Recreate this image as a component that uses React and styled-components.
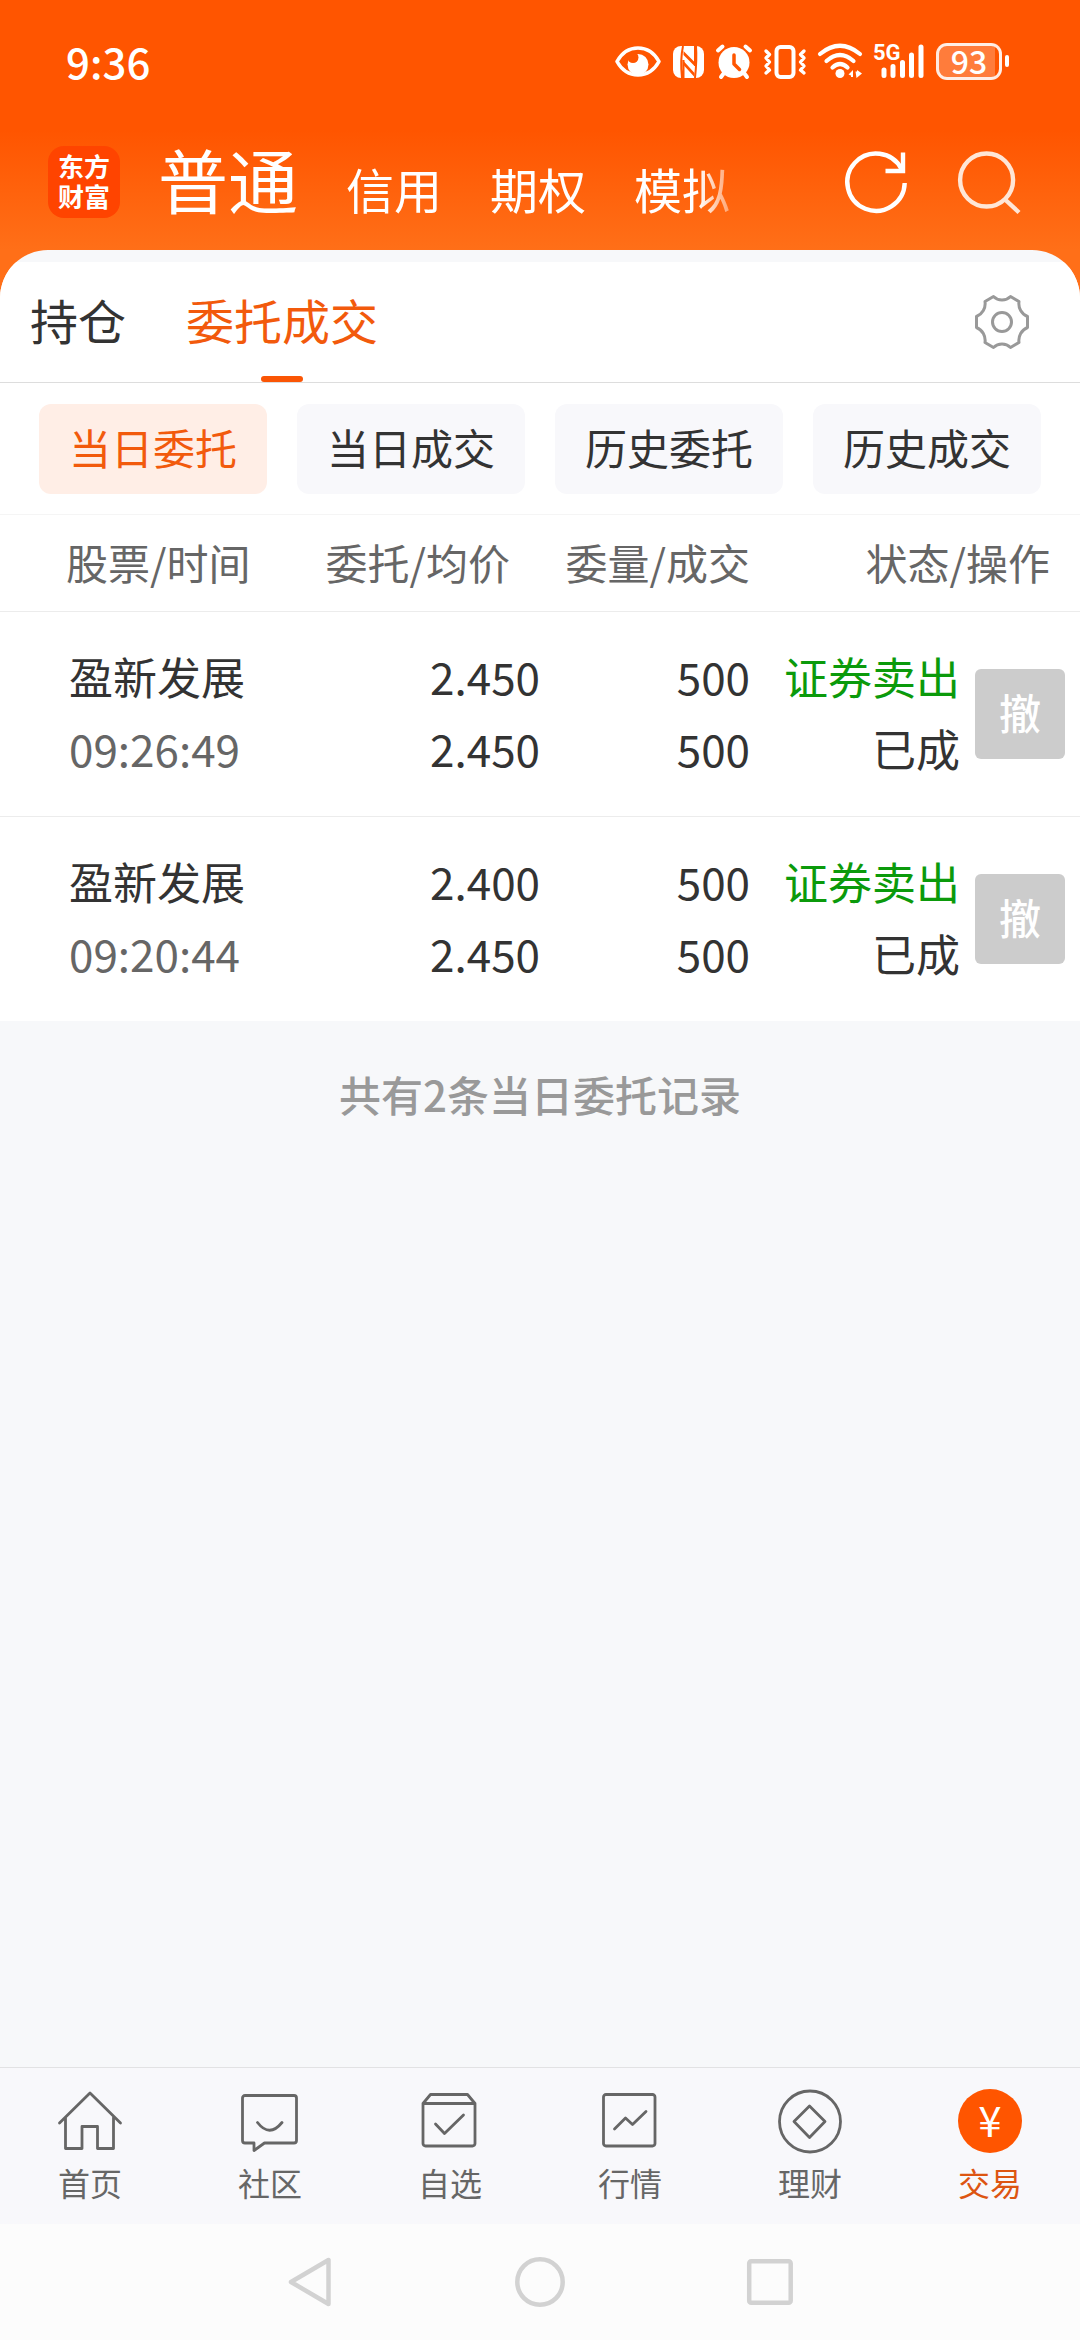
import React, { useState } from "react";
import styled, { createGlobalStyle } from "styled-components";

const GlobalStyle = createGlobalStyle`
  *, *::before, *::after { box-sizing: border-box; }
  body {
    margin: 0;
    background: #f7f8fa;
    color: #333;
    font-family: "Noto Sans CJK SC", "Noto Sans", sans-serif;
  }
  button {
    margin: 0;
    padding: 0;
    border: 0;
    background: none;
    color: inherit;
    font: inherit;
    cursor: pointer;
  }
  svg { display: block; flex: none; overflow: visible; }
`;

const Page = styled.div`
  display: flex;
  flex-direction: column;
  min-height: 100vh;
  background: #ff6f18;
`;

const TopArea = styled.header`
  color: #fff;
  background: linear-gradient(#ff5500 52%, #ff6f18);
`;

const StatusBar = styled.div`
  display: flex;
  align-items: center;
  justify-content: space-between;
  height: 122px;
  padding: 0 71px 0 66px;
`;

const Clock = styled.time`
  font-size: 42px;
  line-height: 60px;
  font-weight: 500;
`;

const StatusIcons = styled.div`
  display: flex;
  align-items: center;
  gap: 12px;
`;

const Battery = styled.div`
  display: flex;
  align-items: center;
  gap: 3px;
  &::after {
    content: "";
    width: 4px;
    height: 12px;
    border-radius: 2px;
    background: #fff;
  }
`;

const BatteryBody = styled.span`
  width: 66px;
  height: 37px;
  border: 3px solid rgba(255, 255, 255, 0.88);
  border-radius: 11px;
  background: linear-gradient(to right, rgba(255, 255, 255, 0.23) 93%, transparent 93%);
  font-size: 32px;
  line-height: 28px;
  font-weight: 500;
  text-align: center;
`;

const AccountBar = styled.div`
  display: flex;
  align-items: center;
  height: 128px;
  padding: 0 59px 8px 48px;
`;

const Logo = styled.div`
  flex: none;
  width: 72px;
  height: 72px;
  margin-right: 38px;
  padding: 5px 10px 7px;
  border-radius: 16px;
  background: #ff4400;
  font-size: 26px;
  line-height: 30px;
  font-weight: 700;
`;

const AccountTabs = styled.nav`
  display: flex;
  align-items: baseline;
  gap: 48px;
  padding-top: 2px;
  white-space: nowrap;
  mask-image: linear-gradient(to right, #000 calc(100% - 32px), rgba(0, 0, 0, 0.4));
`;

const AccountTab = styled.button`
  font-size: ${(p) => (p.$active ? "70px" : "48px")};
  line-height: 80px;
`;

const HeaderActions = styled.div`
  display: flex;
  gap: 51px;
  margin-left: auto;
`;

const Sheet = styled.main`
  flex: 1;
  overflow: hidden;
  padding-top: 12px;
  border-radius: 48px 48px 0 0;
  background: #f7f8fa;
`;

const SectionBar = styled.div`
  display: flex;
  align-items: center;
  justify-content: space-between;
  padding: 0 51px 0 30px;
  border-bottom: 1px solid #ddd;
  background: #fff;
`;

const SectionTabs = styled.nav`
  display: flex;
  gap: 60px;
`;

const SectionTab = styled.button`
  display: flex;
  flex-direction: column;
  align-items: center;
  justify-content: flex-end;
  height: 120px;
  color: ${(p) => (p.$active ? "#f25a0c" : "#333")};
  font-size: 48px;
  line-height: 60px;
  &::after {
    content: "";
    width: 42px;
    height: 6px;
    margin-top: 27px;
    border-radius: 3px;
    background: ${(p) => (p.$active ? "#fa5505" : "transparent")};
  }
`;

const Filters = styled.div`
  display: flex;
  gap: 30px;
  padding: 21px 39px 20px;
  border-bottom: 1px solid #f5f5f5;
  background: #fff;
`;

const Filter = styled.button`
  flex: 1;
  height: 90px;
  padding-bottom: 4px;
  border-radius: 12px;
  color: ${(p) => (p.$active ? "#f25a0c" : "#333")};
  background: ${(p) => (p.$active ? "#ffeee6" : "#f8f8fb")};
  font-size: 42px;
  line-height: 60px;
`;

const Orders = styled.table`
  width: 100%;
  border-collapse: collapse;
  table-layout: fixed;
  background: #fff;
`;

const Col = styled.col`
  width: ${(p) => p.$width || "auto"};
`;

const HeadCell = styled.th`
  height: 96px;
  padding: 0 ${(p) => (p.$flush ? "0" : "30px")} 2px 0;
  border-bottom: 1px solid #ececec;
  color: #666;
  font-size: 42px;
  line-height: 60px;
  font-weight: 400;
  text-align: right;
  white-space: nowrap;
`;

const NameHeadCell = styled(HeadCell)`
  padding-left: 66px;
  text-align: left;
`;

const Row = styled.tr`
  border-bottom: 1px solid #ececec;
  &:last-child { border-bottom: 0; }
`;

const Cell = styled.td`
  padding: 28px 0 32px;
  font-size: 44px;
  line-height: 72px;
  text-align: right;
  white-space: nowrap;
`;

const NameCell = styled(Cell)`
  padding-left: 69px;
  text-align: left;
`;

const ActionCell = styled.td`
  padding: 0 15px;
`;

const Line = styled.div`
  color: ${(p) => p.$color || "#333"};
`;

const CancelButton = styled.button`
  display: block;
  width: 90px;
  height: 90px;
  padding-bottom: 4px;
  border-radius: 6px;
  color: #fff;
  background: #ccc;
  font-size: 42px;
  line-height: 60px;
  font-weight: 500;
`;

const Summary = styled.p`
  margin: 0;
  padding: 43px 0;
  color: #999;
  font-size: 42px;
  line-height: 60px;
  font-weight: 500;
  text-align: center;
`;

const TabBar = styled.nav`
  display: flex;
  border-top: 1px solid #e2e2e4;
  background: #f8f8fb;
`;

const TabLink = styled.a`
  display: flex;
  flex: 1;
  flex-direction: column;
  align-items: center;
  gap: 9px;
  padding: 21px 0 22px;
  color: ${(p) => (p.$active ? "#dd5511" : "#666")};
  font-size: 32px;
  line-height: 40px;
  text-decoration: none;
`;

const SystemBar = styled.div`
  display: flex;
  align-items: center;
  justify-content: center;
  gap: 180px;
  height: 116px;
  background: #fcfcfc;
`;

const SystemButton = styled.button`
  width: 50px;
  height: 50px;
`;

const StatusGlyphs = () => (
  <>
    <svg width="46" height="40" viewBox="615 41 46 40" aria-label="护眼">
      <path d="M617 61.5C627 43.5 649 43.5 659 61.5C649 79.5 627 79.5 617 61.5Z" fill="none" stroke="#fff" strokeWidth="3.6" strokeLinejoin="round" />
      <circle cx="638" cy="64.5" r="10.5" fill="#fff" />
      <circle cx="633" cy="57.5" r="5.5" fill="#ff5500" />
    </svg>
    <svg width="31" height="40" viewBox="673 41 31 40" aria-label="NFC">
      <rect x="673" y="46" width="31" height="32" rx="8" fill="#fff" />
      <path d="M683 46Q680 60 682 78M683.5 60V78M695 46V66" fill="none" stroke="#ff5500" strokeWidth="2" />
      <path d="M683.5 51L694.5 62V66L683.5 55ZM683.5 61L694.5 73V77L683.5 65Z" fill="#ff5500" />
      <path d="M696 46Q697 60 695 78" fill="none" stroke="#ff5500" strokeWidth="2" />
    </svg>
    <svg width="36" height="40" viewBox="716 41 36 40" aria-label="闹钟">
      <circle cx="734" cy="62.5" r="15.5" fill="#fff" />
      <path d="M718 50.5L722.5 46.5M750 50.5L745.5 46.5M724 73L721 77M744 73L747 77" stroke="#fff" strokeWidth="4" strokeLinecap="round" />
      <path d="M734 55V64L739.5 69.5" fill="none" stroke="#ff5500" strokeWidth="3.5" strokeLinecap="round" strokeLinejoin="round" />
    </svg>
    <svg width="42" height="40" viewBox="764 41 42 40" aria-label="振动">
      <g fill="none" stroke="#fff" strokeWidth="4" strokeLinecap="round" strokeLinejoin="round">
        <rect x="776.5" y="47" width="17" height="30" rx="4" />
        <path strokeWidth="3.4" d="M766 51L769.5 54.5L766 58L769.5 62L766 66L769.5 70L766 73M804 51L800.5 54.5L804 58L800.5 62L804 66L800.5 70L804 73" />
      </g>
    </svg>
    <svg width="44" height="40" viewBox="818 41 44 40" aria-label="无线网络">
      <g fill="none" stroke="#fff" strokeWidth="4.2" strokeLinecap="round">
        <path d="M820 54Q840 37.5 860 54" />
        <path d="M826.5 61Q840 49 853.5 61" />
        <path d="M832.5 67.5Q840 60.5 847.5 67.5" />
      </g>
      <circle cx="840" cy="73.5" r="4.5" fill="#fff" />
      <path d="M848.5 74.5L853 70V77H851V75.5ZM855.5 71.5H857V70L862 73.5L856.5 78Z" fill="#fff" />
    </svg>
    <svg width="50" height="40" viewBox="874 41 50 40" aria-label="信号">
      <text x="873" y="60" fill="#fff" fontSize="22" fontWeight="700" fontFamily="Liberation Sans Narrow, Roboto, sans-serif">5G</text>
      <path d="M884 70V75.5M893 66.5V75.5M902.5 62.5V75.5M911.5 55V75.5M921 47V75.5" stroke="#fff" strokeWidth="5" strokeLinecap="round" />
    </svg>
  </>
);

const RefreshIcon = () => (
  <svg width="62" height="62" viewBox="0 0 62 62" fill="none" stroke="#fff" strokeWidth="4.4">
    <path d="M59.7 32A28.7 28.7 0 1 1 56.5 18" />
    <path d="M58 1.5V20H40.5" />
  </svg>
);

const SearchIcon = () => (
  <svg width="63" height="62" viewBox="0 0 63 62" fill="none" stroke="#ffe6d6" strokeWidth="4.4">
    <circle cx="28.6" cy="29" r="26.5" />
    <path d="M47 48.5L61 61.5" />
  </svg>
);

const GearIcon = () => (
  <svg width="54" height="54" viewBox="-27 -27 54 54" fill="none" stroke="#999" strokeWidth="3" strokeLinejoin="round">
    <path d="M-8.5 -25.5A12 12 0 0 0 8.5 -25.5L17 -20.5A14 14 0 0 0 25.5 -5.5V5.5A14 14 0 0 0 17 20.5L8.5 25.5A12 12 0 0 0 -8.5 25.5L-17 20.5A14 14 0 0 0 -25.5 5.5V-5.5A14 14 0 0 0 -17 -20.5Z" />
    <circle r="9.5" />
  </svg>
);

const TabIcon = ({ children }) => (
  <svg width="64" height="64" viewBox="0 0 64 64" fill="none" stroke="#666" strokeWidth="2.8" strokeLinecap="round" strokeLinejoin="round" aria-hidden="true">
    {children}
  </svg>
);

const tabs = [
  {
    label: "首页",
    icon: <path d="M1.5 34L32 4L62.5 34M7.5 28.5V59.5H24V37.5H39.5V59.5H55.5V28.5" />,
  },
  {
    label: "社区",
    icon: <path d="M7 6.5H56A2.5 2.5 0 0 1 58.5 9V51.5A2.5 2.5 0 0 1 56 54H26.5L16 61.5V54H7A2.5 2.5 0 0 1 4.5 51.5V9A2.5 2.5 0 0 1 7 6.5ZM19.5 33.5Q31.5 49 44 33.5" />,
  },
  {
    label: "自选",
    icon: <path d="M5 14.5L12.5 5.5H49.5L57 14.5V54.5A2.5 2.5 0 0 1 54.5 57H7.5A2.5 2.5 0 0 1 5 54.5V14.5H57M17.5 35L26.5 44.5L45.5 26" />,
  },
  {
    label: "行情",
    icon: <path d="M8 5.5H54.5A2.5 2.5 0 0 1 57 8V54.5A2.5 2.5 0 0 1 54.5 57H8A2.5 2.5 0 0 1 5.5 54.5V8A2.5 2.5 0 0 1 8 5.5ZM16.5 40L27.5 29L34.5 35.5L48 22.5" />,
  },
  {
    label: "理财",
    icon: (
      <>
        <circle cx="32" cy="32.5" r="30.5" />
        <path d="M31.5 17L47 32.5L31.5 48.5L16 32.5Z" />
      </>
    ),
  },
  {
    label: "交易",
    active: true,
    icon: (
      <>
        <circle cx="32" cy="32" r="32" fill="#ff5500" stroke="none" />
        <text x="32" y="48" textAnchor="middle" fill="#fff" stroke="none" fontSize="42" fontFamily="Noto Sans CJK SC, sans-serif">¥</text>
      </>
    ),
  },
];

const filters = ["当日委托", "当日成交", "历史委托", "历史成交"];

const orders = [
  { name: "盈新发展", time: "09:26:49", price: "2.450", average: "2.450", quantity: "500", filled: "500", side: "证券卖出", state: "已成" },
  { name: "盈新发展", time: "09:20:44", price: "2.400", average: "2.450", quantity: "500", filled: "500", side: "证券卖出", state: "已成" },
];

export default function App() {
  const [filter, setFilter] = useState(filters[0]);

  return (
    <Page>
      <GlobalStyle />
      <TopArea>
        <StatusBar>
          <Clock>9:36</Clock>
          <StatusIcons>
            <StatusGlyphs />
            <Battery>
              <BatteryBody>93</BatteryBody>
            </Battery>
          </StatusIcons>
        </StatusBar>
        <AccountBar>
          <Logo>东方财富</Logo>
          <AccountTabs>
            <AccountTab $active>普通</AccountTab>
            <AccountTab>信用</AccountTab>
            <AccountTab>期权</AccountTab>
            <AccountTab>模拟</AccountTab>
          </AccountTabs>
          <HeaderActions>
            <button aria-label="刷新"><RefreshIcon /></button>
            <button aria-label="搜索"><SearchIcon /></button>
          </HeaderActions>
        </AccountBar>
      </TopArea>

      <Sheet>
        <SectionBar>
          <SectionTabs>
            <SectionTab>持仓</SectionTab>
            <SectionTab $active>委托成交</SectionTab>
          </SectionTabs>
          <button aria-label="设置"><GearIcon /></button>
        </SectionBar>

        <Filters>
          {filters.map((name) => (
            <Filter key={name} $active={name === filter} onClick={() => setFilter(name)}>
              {name}
            </Filter>
          ))}
        </Filters>

        <Orders>
          <colgroup>
            <Col />
            <Col />
            <Col $width="210px" />
            <Col $width="210px" />
            <Col $width="120px" />
          </colgroup>
          <thead>
            <tr>
              <NameHeadCell scope="col">股票/时间</NameHeadCell>
              <HeadCell scope="col">委托/均价</HeadCell>
              <HeadCell scope="col" $flush>委量/成交</HeadCell>
              <HeadCell scope="col" colSpan={2}>状态/操作</HeadCell>
            </tr>
          </thead>
          <tbody>
            {orders.map((o) => (
              <Row key={o.time}>
                <NameCell>
                  <Line>{o.name}</Line>
                  <Line $color="#666">{o.time}</Line>
                </NameCell>
                <Cell>
                  <Line>{o.price}</Line>
                  <Line>{o.average}</Line>
                </Cell>
                <Cell>
                  <Line>{o.quantity}</Line>
                  <Line>{o.filled}</Line>
                </Cell>
                <Cell>
                  <Line $color="#0b9a0b">{o.side}</Line>
                  <Line>{o.state}</Line>
                </Cell>
                <ActionCell>
                  <CancelButton disabled>撤</CancelButton>
                </ActionCell>
              </Row>
            ))}
          </tbody>
        </Orders>

        <Summary>共有2条当日委托记录</Summary>
      </Sheet>

      <TabBar>
        {tabs.map((t) => (
          <TabLink key={t.label} href="#" $active={t.active}>
            <TabIcon>{t.icon}</TabIcon>
            {t.label}
          </TabLink>
        ))}
      </TabBar>

      <SystemBar>
        <SystemButton aria-label="返回">
          <svg width="50" height="50" viewBox="0 0 50 50" fill="none" stroke="#d2d2d2" strokeWidth="4.5" strokeLinejoin="round">
            <path d="M43.5 3V47L6 25Z" />
          </svg>
        </SystemButton>
        <SystemButton aria-label="主屏幕">
          <svg width="50" height="50" viewBox="0 0 50 50" fill="none" stroke="#d2d2d2" strokeWidth="4.5">
            <circle cx="25" cy="25" r="22.7" />
          </svg>
        </SystemButton>
        <SystemButton aria-label="最近任务">
          <svg width="50" height="50" viewBox="0 0 50 50" fill="none" stroke="#d2d2d2" strokeWidth="4.5">
            <rect x="4.2" y="4.2" width="41.5" height="41.5" rx="2" />
          </svg>
        </SystemButton>
      </SystemBar>
    </Page>
  );
}
